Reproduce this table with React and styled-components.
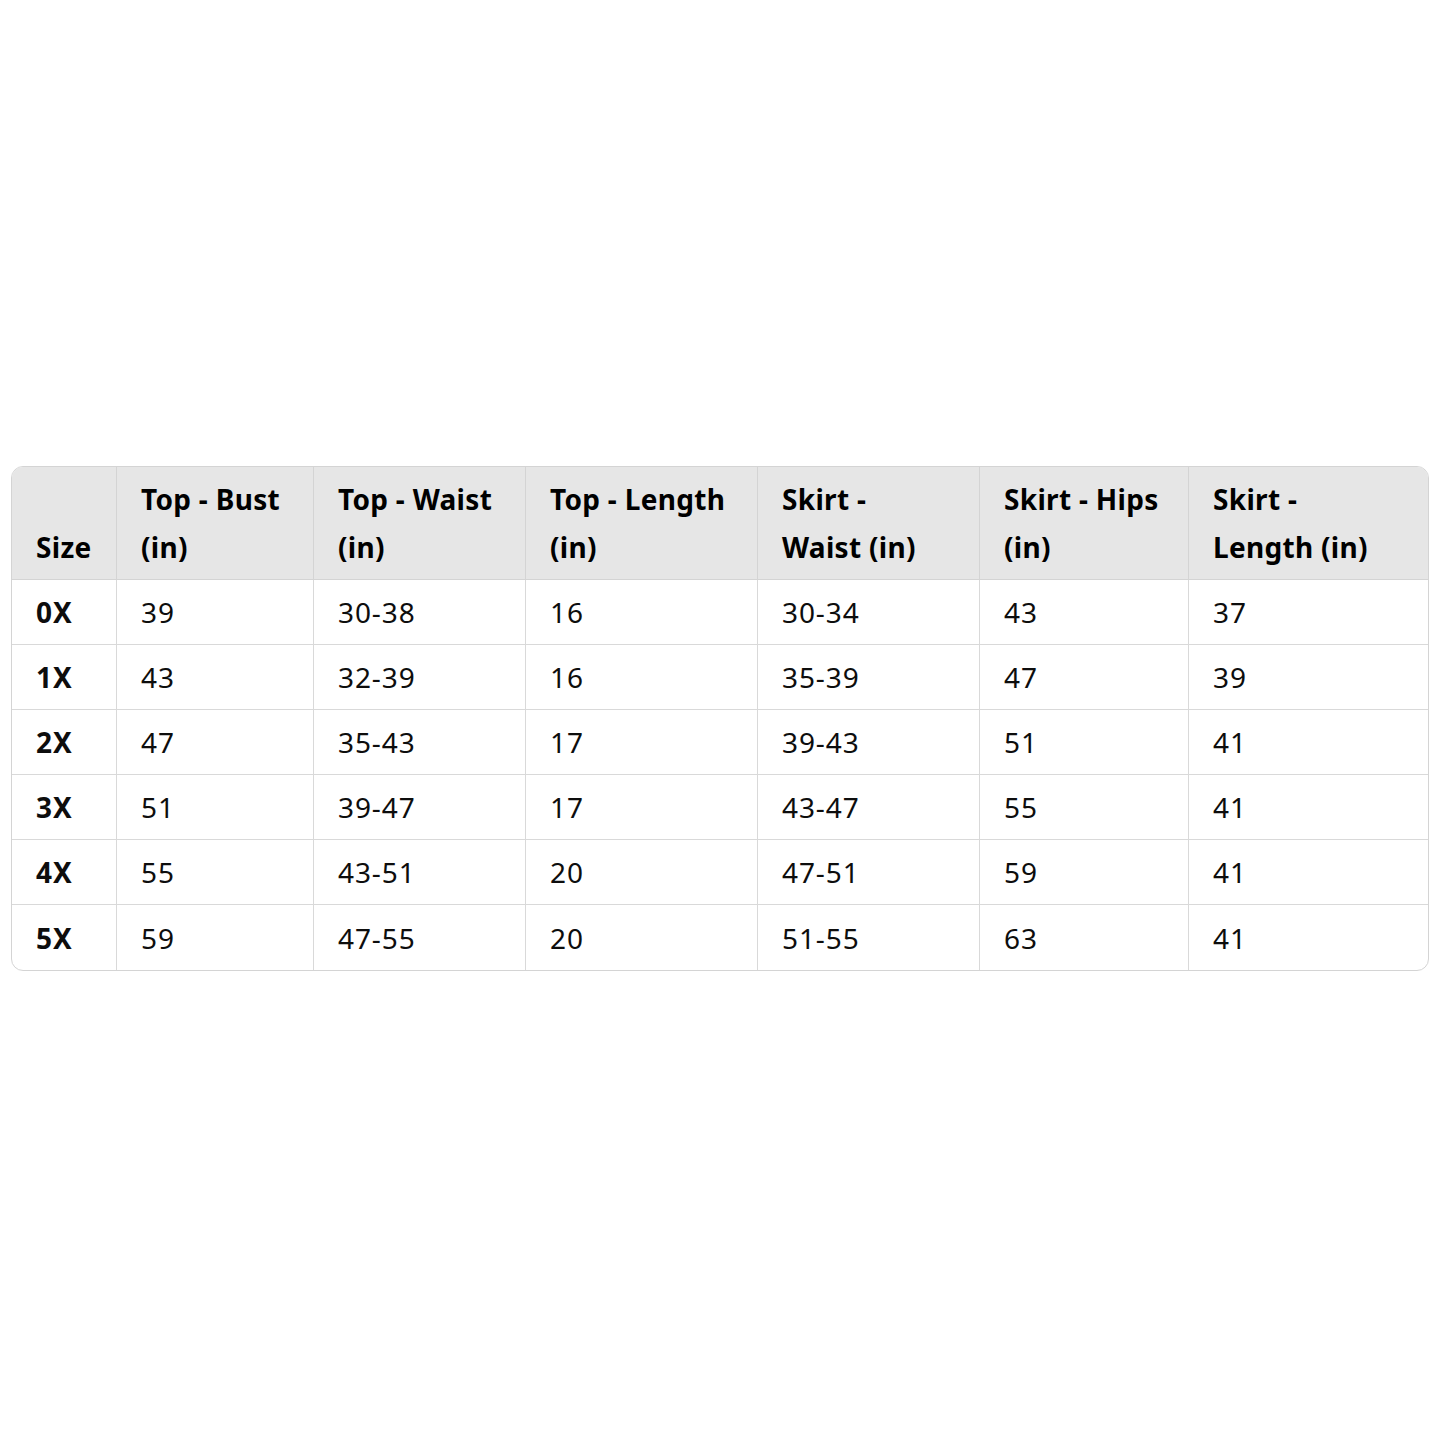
import React from 'react';
import styled, { createGlobalStyle } from 'styled-components';

const GlobalStyle = createGlobalStyle`
  html, body {
    margin: 0;
    padding: 0;
    background: #ffffff;
  }
  body {
    font-family: "Noto Sans", "Open Sans", sans-serif;
    color: #0d0d0d;
  }
`;

// --- Styled Components ---
const Page = styled.div`
  width: 1445px;
  height: 1445px;
  display: flex;
  align-items: flex-start;
  justify-content: flex-start;
  padding: 466px 0 0 11px;
  box-sizing: border-box;
`;

const Wrapper = styled.div`
  width: 1418px;
  box-sizing: border-box;
  border: 1px solid #d4d4d4;
  border-radius: 12px;
  overflow: hidden;
`;

const Table = styled.table`
  width: 100%;
  border-collapse: separate;
  border-spacing: 0;
  table-layout: fixed;
  font-size: 28px;
  letter-spacing: 0.9px;
`;

const HeadCell = styled.th`
  background: #e6e6e6;
  text-align: left;
  vertical-align: bottom;
  font-weight: 700;
  letter-spacing: 0.3px;
  line-height: 48px;
  padding: 8px 12px 8px 24px;
  height: 96px;
  color: #000;
  border-bottom: 1px solid #d4d4d4;
  border-left: ${({ $first }) => ($first ? 'none' : '1px solid #d4d4d4')};
`;

const Cell = styled.td`
  text-align: left;
  vertical-align: middle;
  font-weight: ${({ $bold }) => ($bold ? 700 : 400)};
  line-height: 36px;
  height: 65px;
  padding: 0 24px;
  box-sizing: border-box;
  border-bottom: ${({ $last }) => ($last ? 'none' : '1px solid #d9d9d9')};
  border-left: ${({ $first }) => ($first ? 'none' : '1px solid #d9d9d9')};
`;

const widths = [104, 197, 212, 232, 222, 209, 240];

const headers = [
  ['Size'],
  ['Top - Bust', '(in)'],
  ['Top - Waist', '(in)'],
  ['Top - Length', '(in)'],
  ['Skirt -', 'Waist (in)'],
  ['Skirt - Hips', '(in)'],
  ['Skirt -', 'Length (in)'],
];

const rows = [
  ['0X', '39', '30-38', '16', '30-34', '43', '37'],
  ['1X', '43', '32-39', '16', '35-39', '47', '39'],
  ['2X', '47', '35-43', '17', '39-43', '51', '41'],
  ['3X', '51', '39-47', '17', '43-47', '55', '41'],
  ['4X', '55', '43-51', '20', '47-51', '59', '41'],
  ['5X', '59', '47-55', '20', '51-55', '63', '41'],
];

const App = () => (
  <>
    <GlobalStyle />
    <Page>
      <Wrapper>
        <Table>
          <colgroup>
            {widths.map((w, i) => (
              <col key={i} style={{ width: w }} />
            ))}
          </colgroup>
          <thead>
            <tr>
              {headers.map((lines, i) => (
                <HeadCell key={i} $first={i === 0}>
                  {lines.map((l, li) => (
                    <React.Fragment key={li}>
                      {li > 0 && <br />}
                      {l}
                    </React.Fragment>
                  ))}
                </HeadCell>
              ))}
            </tr>
          </thead>
          <tbody>
            {rows.map((r, ri) => (
              <tr key={r[0]}>
                {r.map((v, ci) => (
                  <Cell
                    key={ci}
                    $first={ci === 0}
                    $bold={ci === 0}
                    $last={ri === rows.length - 1}
                  >
                    {v}
                  </Cell>
                ))}
              </tr>
            ))}
          </tbody>
        </Table>
      </Wrapper>
    </Page>
  </>
);

export default App;
